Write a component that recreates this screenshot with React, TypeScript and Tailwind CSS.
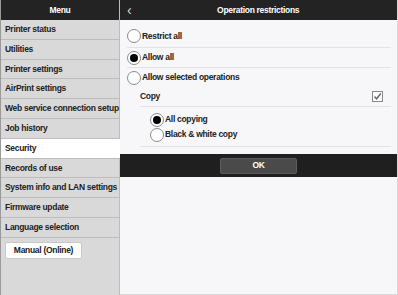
const menuItems = [
  'Printer status',
  'Utilities',
  'Printer settings',
  'AirPrint settings',
  'Web service connection setup',
  'Job history',
  'Security',
  'Records of use',
  'System info and LAN settings',
  'Firmware update',
  'Language selection',
]

function Radio({ checked }: { checked?: boolean }) {
  return (
    <span className="w-[14px] h-[14px] rounded-full border border-[#8a8a8a] bg-white flex items-center justify-center shrink-0">
      {checked && <span className="w-[8px] h-[8px] rounded-full bg-black" />}
    </span>
  )
}

export default function App() {
  return (
    <div
      className="w-[398px] h-[295px] flex bg-[#f7f6f9] text-[#222] overflow-hidden tracking-[-0.3px]"
      style={{ fontFamily: '"Liberation Sans", Arial, sans-serif' }}
    >
      {/* sidebar */}
      <div className="w-[120px] shrink-0 flex flex-col bg-[#d9d9d9] border-l border-[#9a9a9a] border-r border-r-[#bdbdbd]">
        <div className="h-[20px] bg-[#232323] text-white text-[8.5px] font-bold flex items-center justify-center">Menu</div>
        {menuItems.map((item) => (
          <div
            key={item}
            className={
              'h-[19.8px] px-[4px] flex items-center text-[8.5px] font-bold whitespace-nowrap border-b border-[#bcbcbc] ' +
              (item === 'Security' ? 'bg-white -mr-px' : '')
            }
          >
            {item}
          </div>
        ))}
        <div className="px-[4px] pt-[4px]">
          <div className="w-[77px] h-[17px] bg-white rounded-[2px] border border-[#c8c8c8] flex items-center justify-center text-[8.5px] font-bold">
            Manual (Online)
          </div>
        </div>
      </div>

      {/* main */}
      <div className="flex-1 flex flex-col border-r border-[#d8d8d8] border-b">
        <div className="h-[20px] bg-[#232323] text-white flex items-center">
          <span className="pl-[7px] text-[14px] leading-none text-[#ddd]">‹</span>
          <span className="flex-1 text-center text-[8.5px] font-bold -ml-[12px]">Operation restrictions</span>
        </div>
        <div className="flex flex-col pl-[7px] pr-[6px] text-[8.5px] font-bold">
          <div className="h-[28px] flex items-center gap-[1px] border-b border-[#e2e2e2] pt-[5px]">
            <Radio />
            <span>Restrict all</span>
          </div>
          <div className="h-[20px] flex items-center gap-[1px] border-b border-[#e2e2e2]">
            <Radio checked />
            <span>Allow all</span>
          </div>
          <div className="h-[19px] flex items-center gap-[1px]">
            <Radio />
            <span>Allow selected operations</span>
          </div>
          <div className="ml-[13px] flex flex-col">
            <div className="h-[20px] flex items-center justify-between border-b border-[#e2e2e2] pr-[8px]">
              <span>Copy</span>
              <span className="w-[11px] h-[11px] border border-[#888] bg-white flex items-center justify-center">
                <svg width="9" height="9" viewBox="0 0 9 9">
                  <path d="M1.5 4.5 L3.6 6.8 L7.8 1.5" fill="none" stroke="#666" strokeWidth="1.4" />
                </svg>
              </span>
            </div>
            <div className="pl-[10px] flex flex-col pt-[5px] pb-[4px] border-b border-[#e2e2e2]">
              <div className="h-[15px] flex items-center gap-[1px]">
                <Radio checked />
                <span>All copying</span>
              </div>
              <div className="h-[15px] flex items-center gap-[1px]">
                <Radio />
                <span>Black &amp; white copy</span>
              </div>
            </div>
          </div>
        </div>
        <div className="mt-[7px] h-[23px] bg-[#1f1f1f] flex items-center justify-center">
          <div className="w-[77px] h-[16px] bg-[#4a4a4a] rounded-[2px] border border-[#5c5c5c] text-white text-[8.5px] font-bold flex items-center justify-center">
            OK
          </div>
        </div>
      </div>
    </div>
  )
}
